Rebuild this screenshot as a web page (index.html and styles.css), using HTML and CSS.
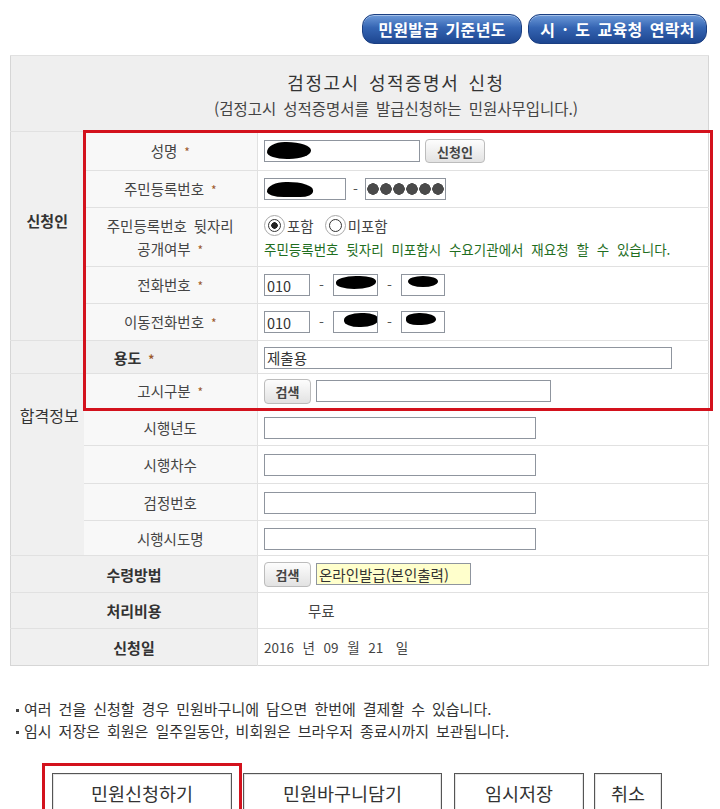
FILE: index.html
```html
<!DOCTYPE html>
<html lang="ko">
<head>
    <meta charset="UTF-8">
    <meta name="viewport" content="width=device-width, initial-scale=1.0">
    <title>검정고시 성적증명서 신청</title>
    <link rel="stylesheet" href="styles.css">
</head>
<body>
    <div class="topbar">
        <a class="pill pill-year" href="#">민원발급 기준년도</a>
        <a class="pill pill-office" href="#">시 · 도 교육청 연락처</a>
    </div>

    <div class="sheet">
        <table class="form">
            <colgroup>
                <col class="c1">
                <col class="c2">
                <col class="c3">
            </colgroup>
            <tr class="head">
                <td colspan="3">
                    <div class="title">검정고시 성적증명서 신청</div>
                    <div class="sub">(검정고시 성적증명서를 발급신청하는 민원사무입니다.)</div>
                </td>
            </tr>
            <tr class="r39">
                <th rowspan="5" class="grp grp-apply">신청인</th>
                <th class="lbl">성명 <em>*</em></th>
                <td class="val">
                    <div class="line">
                        <span class="box w156"><i class="blot b1"></i></span>
                        <button type="button" class="sbtn w60">신청인</button>
                    </div>
                </td>
            </tr>
            <tr class="r37">
                <th class="lbl">주민등록번호 <em>*</em></th>
                <td class="val">
                    <div class="line">
                        <span class="box w82"><i class="blot b2"></i></span>
                        <span class="dash">-</span>
                        <span class="box w81 dots"></span>
                    </div>
                </td>
            </tr>
            <tr class="r59">
                <th class="lbl">주민등록번호 뒷자리<br>공개여부 <em>*</em></th>
                <td class="val">
                    <div class="line">
                        <label class="opt"><input type="radio" name="open" checked>포함</label>
                        <label class="opt"><input type="radio" name="open">미포함</label>
                    </div>
                    <div class="note">주민등록번호 뒷자리 미포함시 수요기관에서 재요청 할 수 있습니다.</div>
                </td>
            </tr>
            <tr class="r37">
                <th class="lbl">전화번호 <em>*</em></th>
                <td class="val">
                    <div class="line tel">
                        <input class="box w46" type="text" value="010">
                        <span class="dash">-</span>
                        <span class="box w45"><i class="blot b3"></i></span>
                        <span class="dash">-</span>
                        <span class="box w44"><i class="blot b4"></i></span>
                    </div>
                </td>
            </tr>
            <tr class="r37">
                <th class="lbl">이동전화번호 <em>*</em></th>
                <td class="val">
                    <div class="line tel">
                        <input class="box w46" type="text" value="010">
                        <span class="dash">-</span>
                        <span class="box w45"><i class="blot b5"></i></span>
                        <span class="dash">-</span>
                        <span class="box w44"><i class="blot b6"></i></span>
                    </div>
                </td>
            </tr>
            <tr class="r33">
                <th colspan="2" class="wide">용도 <em>*</em></th>
                <td class="val"><input class="box w408" type="text" value="제출용"></td>
            </tr>
            <tr class="r35">
                <th rowspan="5" class="grp grp-pass">합격정보</th>
                <th class="lbl">고시구분 <em>*</em></th>
                <td class="val">
                    <div class="line">
                        <button type="button" class="sbtn w47">검색</button>
                        <input class="box w235" type="text">
                    </div>
                </td>
            </tr>
            <tr class="r37">
                <th class="lbl">시행년도</th>
                <td class="val"><input class="box w272" type="text"></td>
            </tr>
            <tr class="r38">
                <th class="lbl">시행차수</th>
                <td class="val"><input class="box w272" type="text"></td>
            </tr>
            <tr class="r37">
                <th class="lbl">검정번호</th>
                <td class="val"><input class="box w272" type="text"></td>
            </tr>
            <tr class="r35">
                <th class="lbl">시행시도명</th>
                <td class="val"><input class="box w272" type="text"></td>
            </tr>
            <tr class="r37">
                <th colspan="2" class="wide">수령방법</th>
                <td class="val">
                    <div class="line">
                        <button type="button" class="sbtn w47">검색</button>
                        <input class="box w155 pick" type="text" value="온라인발급(본인출력)">
                    </div>
                </td>
            </tr>
            <tr class="r36">
                <th colspan="2" class="wide">처리비용</th>
                <td class="val fee">무료</td>
            </tr>
            <tr class="r37">
                <th colspan="2" class="wide">신청일</th>
                <td class="val date">2016 <span>년</span> 09 <span>월</span> 21 <span class="day">일</span></td>
            </tr>
        </table>
        <div class="mark"></div>
    </div>

    <ul class="notes">
        <li>여러 건을 신청할 경우 민원바구니에 담으면 한번에 결제할 수 있습니다.</li>
        <li>임시 저장은 회원은 일주일동안, 비회원은 브라우저 종료시까지 보관됩니다.</li>
    </ul>

    <div class="actions">
        <button type="button" class="act act-apply">민원신청하기</button>
        <button type="button" class="act act-basket">민원바구니담기</button>
        <button type="button" class="act act-save">임시저장</button>
        <button type="button" class="act act-cancel">취소</button>
    </div>
</body>
</html>
```

FILE: styles.css
```css
body {
    margin: 0;
    font-family: "Noto Sans CJK KR", "Noto Sans", sans-serif;
    font-size: 14px;
    color: #333;
    word-spacing: 0.2em;
    background-color: #fff;
}

/* top links */
.topbar {
    display: flex;
    justify-content: flex-end;
    gap: 6px;
    height: 30px;
    padding: 14px 13px 11px 0;
}

.pill {
    display: inline-flex;
    align-items: center;
    justify-content: center;
    box-sizing: border-box;
    height: 30px;
    border: 1px solid #1b3f82;
    border-radius: 12px;
    background: linear-gradient(#6d9ad9, #3565b3 45%, #1d4690);
    box-shadow: inset 0 1px 0 rgba(255, 255, 255, 0.4);
    color: #fff;
    font-size: 16px;
    font-weight: bold;
    letter-spacing: 0.3px;
    word-spacing: 0.15em;
    text-decoration: none;
}

.pill-year {
    width: 160px;
}

.pill-office {
    width: 179px;
}

/* form table */
.sheet {
    position: relative;
    width: 698px;
    margin-left: 10px;
}

.form {
    width: 698px;
    border-collapse: collapse;
    table-layout: fixed;
    border: 1px solid #d6d6d6;
}

.c1 { width: 73px; }
.c2 { width: 174px; }
.c3 { width: 451px; }

.form th,
.form td {
    padding: 0;
    border-top: 1px solid #e1e1e1;
    font-weight: normal;
}

.head td {
    height: 75px;
    padding-left: 73px;
    background-color: #efefef;
    text-align: center;
}

.title {
    font-size: 18px;
    letter-spacing: 1.5px;
    color: #333;
}

.sub {
    margin-top: 2px;
    font-size: 15.5px;
    color: #444;
}

.r33 { height: 33px; }
.r35 { height: 35px; }
.r36 { height: 36px; }
.r37 { height: 37px; }
.r38 { height: 38px; }
.r39 { height: 39px; }
.r59 { height: 59px; }

.grp {
    background-color: #f0f0f0;
    font-size: 15px;
    color: #333;
}

.grp-apply {
    padding-bottom: 32px !important;
    font-weight: bold !important;
}

.grp-pass {
    padding-bottom: 100px !important;
    padding-left: 4px !important;
    font-size: 16px;
    white-space: nowrap;
}

.lbl {
    background-color: #f8f8f8;
    border-right: 1px solid #e1e1e1;
    text-align: center;
    font-size: 14.5px;
    line-height: 23px;
    color: #444;
}

.wide {
    background-color: #f0f0f0;
    border-right: 1px solid #e1e1e1;
    text-align: center;
    font-size: 15px;
    font-weight: bold !important;
    color: #333;
}

.form em {
    font-style: normal;
    font-size: 12px;
    color: #9c5a2c;
}

.val {
    padding-left: 6px !important;
    background-color: #fff;
}

.line {
    display: flex;
    align-items: center;
    gap: 5px;
}

.tel {
    gap: 7px;
}

.dash {
    color: #555;
    padding: 0 2px;
}

/* input boxes */
.box {
    display: inline-block;
    box-sizing: border-box;
    height: 22px;
    margin: 0;
    padding: 0 2px;
    border: 1px solid #8f959e;
    background-color: #fff;
    font-family: inherit;
    font-size: 14.5px;
    color: #333;
    overflow: hidden;
    vertical-align: middle;
}

.pick {
    background-color: #ffffcc;
}

.w44 { width: 44px; }
.w45 { width: 45px; }
.w46 { width: 46px; }
.w81 { width: 81px; }
.w82 { width: 82px; }
.w155 { width: 155px; }
.w156 { width: 156px; }
.w235 { width: 235px; }
.w272 { width: 272px; }
.w408 { width: 408px; }

.dots {
    background: radial-gradient(circle at 7px 50%, #4a4a4a 5.5px, transparent 6px) 0 0 / 13px 100% repeat-x;
}

/* scribbled-out values */
.blot {
    display: block;
    height: 17px;
    margin-top: 1px;
    background-color: #000;
}

.b1 {
    width: 44px;
    border-radius: 40% 55% 50% 45% / 60% 50% 50% 40%;
}

.b2 {
    width: 46px;
    height: 15px;
    margin-top: 3px;
    border-radius: 45% 60% 30% 40% / 70% 60% 40% 40%;
}

.b3 {
    width: 40px;
    height: 13px;
    border-radius: 50% 40% 55% 45%;
}

.b4 {
    width: 30px;
    height: 11px;
    margin-left: 4px;
    border-radius: 50%;
}

.b5 {
    width: 34px;
    height: 14px;
    margin-left: 8px;
    border-radius: 50% 40% 50% 45%;
}

.b6 {
    width: 30px;
    height: 12px;
    margin-left: 2px;
    border-radius: 45% 55% 50% 40%;
}

/* small grey buttons */
.sbtn {
    box-sizing: border-box;
    height: 25px;
    padding: 0;
    border: 1px solid #bcbcbc;
    border-radius: 4px;
    background: linear-gradient(#fdfdfd, #e2e2e2);
    font-family: inherit;
    font-size: 13px;
    font-weight: bold;
    color: #444;
    cursor: pointer;
}

.w47 { width: 47px; }
.w60 { width: 60px; height: 24px; }

/* radio options */
.opt {
    display: inline-flex;
    align-items: center;
    gap: 6px;
    margin-right: 6px;
    font-size: 14.5px;
    color: #444;
}

.opt input {
    appearance: none;
    width: 13px;
    height: 13px;
    margin: 0 0 0 4px;
    border: 1px solid #333;
    border-radius: 50%;
    background-color: #fff;
    outline: 1px solid #a8a8a8;
    outline-offset: 3px;
}

.opt input:checked {
    background: radial-gradient(circle, #222 3px, #fff 3.5px);
}

.note {
    margin-top: 3px;
    font-size: 13.5px;
    word-spacing: 0.3em;
    color: #1f6e1f;
}

.fee {
    padding-left: 50px !important;
    font-size: 14.5px;
    color: #444;
}

.date {
    font-size: 13.5px;
    color: #444;
}

.date span {
    margin: 0 2px;
}

.date .day {
    margin-left: 6px;
}

.mark {
    position: absolute;
    left: 73px;
    top: 75px;
    width: 630px;
    height: 281px;
    box-sizing: border-box;
    border: 3px solid #d3121d;
    pointer-events: none;
}

/* notes */
.notes {
    margin: 32px 0 0 16px;
    padding: 0;
    list-style: none;
    font-size: 15px;
    line-height: 22px;
    color: #333;
}

.notes li::before {
    content: "";
    display: inline-block;
    width: 3px;
    height: 3px;
    margin-right: 5px;
    vertical-align: middle;
    background-color: #444;
}

/* bottom actions */
.actions {
    display: flex;
    margin: 31px 0 0 52px;
}

.act {
    box-sizing: border-box;
    height: 40px;
    padding: 0;
    border: 1px solid #555;
    box-shadow: inset 0 0 0 1px #e4e4e4;
    background-color: #fff;
    font-family: inherit;
    font-size: 18.5px;
    color: #333;
}

.act-apply {
    width: 180px;
    outline: 3px solid #d3121d;
    outline-offset: 7px;
}

.act-basket {
    width: 199px;
    margin-left: 11px;
}

.act-save {
    width: 130px;
    margin-left: 12px;
}

.act-cancel {
    width: 68px;
    margin-left: 10px;
}
```
